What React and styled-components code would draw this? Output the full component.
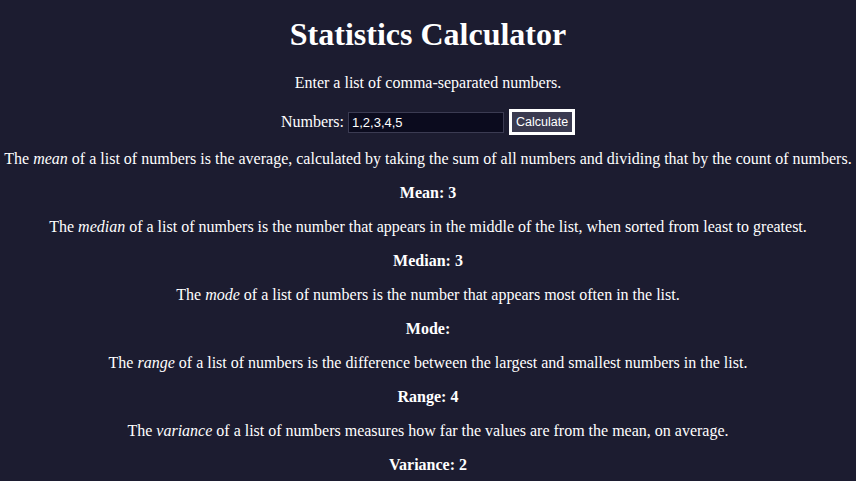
import React, { useState } from "react";
import styled, { createGlobalStyle } from "styled-components";

const Global = createGlobalStyle`
  html, body { margin: 0; padding: 0; background: #1c1c30; }
  body { font-family: "Liberation Serif", "Times New Roman", serif; color: #ffffff; }
`;

const Page = styled.div`
  text-align: center;
  background: #1c1c30;
  min-height: 481px;
  display: flow-root;
`;

const Title = styled.h1`
  font-size: 32px;
  font-weight: bold;
  margin: 16px 0 21px;
`;

const Text = styled.p`
  font-size: 16px;
  margin: 16px 0;
  font-weight: ${(p) => (p.$bold ? "bold" : "normal")};
`;

const Row = styled.form`
  display: flex;
  justify-content: center;
  align-items: center;
  gap: 4px;
  font-size: 16px;
  margin: 17px 0 -1px;
`;

const Input = styled.input`
  width: 156px;
  height: 21px;
  box-sizing: border-box;
  background: #0b0b1e;
  border: 1px solid #3b3b52;
  color: #ffffff;
  font-family: "Liberation Sans", Arial, sans-serif;
  font-size: 13px;
  padding: 1px 3px;
  outline: none;
`;

const Button = styled.button`
  height: 26px;
  box-sizing: border-box;
  background: #3a3a50;
  border: 3px solid #ffffff;
  color: #ffffff;
  font-family: "Liberation Sans", Arial, sans-serif;
  font-size: 12.5px;
  padding: 0 4px;
  margin-left: 1px;
`;

const sections = [
  ["mean", "is the average, calculated by taking the sum of all numbers and dividing that by the count of numbers.", "Mean: 3"],
  ["median", "is the number that appears in the middle of the list, when sorted from least to greatest.", "Median: 3"],
  ["mode", "is the number that appears most often in the list.", "Mode:"],
  ["range", "is the difference between the largest and smallest numbers in the list.", "Range: 4"],
  ["variance", "measures how far the values are from the mean, on average.", "Variance: 2"],
];

export default function App() {
  const [val, setVal] = useState("1,2,3,4,5");
  return (
    <Page>
      <Global />
      <Title>Statistics Calculator</Title>
      <Text>Enter a list of comma-separated numbers.</Text>
      <Row onSubmit={(e) => e.preventDefault()}>
        <span>Numbers:</span>
        <Input value={val} onChange={(e) => setVal(e.target.value)} />
        <Button type="submit">Calculate</Button>
      </Row>
      {sections.map(([term, desc, result]) => (
        <React.Fragment key={term}>
          <Text>
            The <em>{term}</em> of a list of numbers {desc}
          </Text>
          <Text $bold>{result}</Text>
        </React.Fragment>
      ))}
    </Page>
  );
}
